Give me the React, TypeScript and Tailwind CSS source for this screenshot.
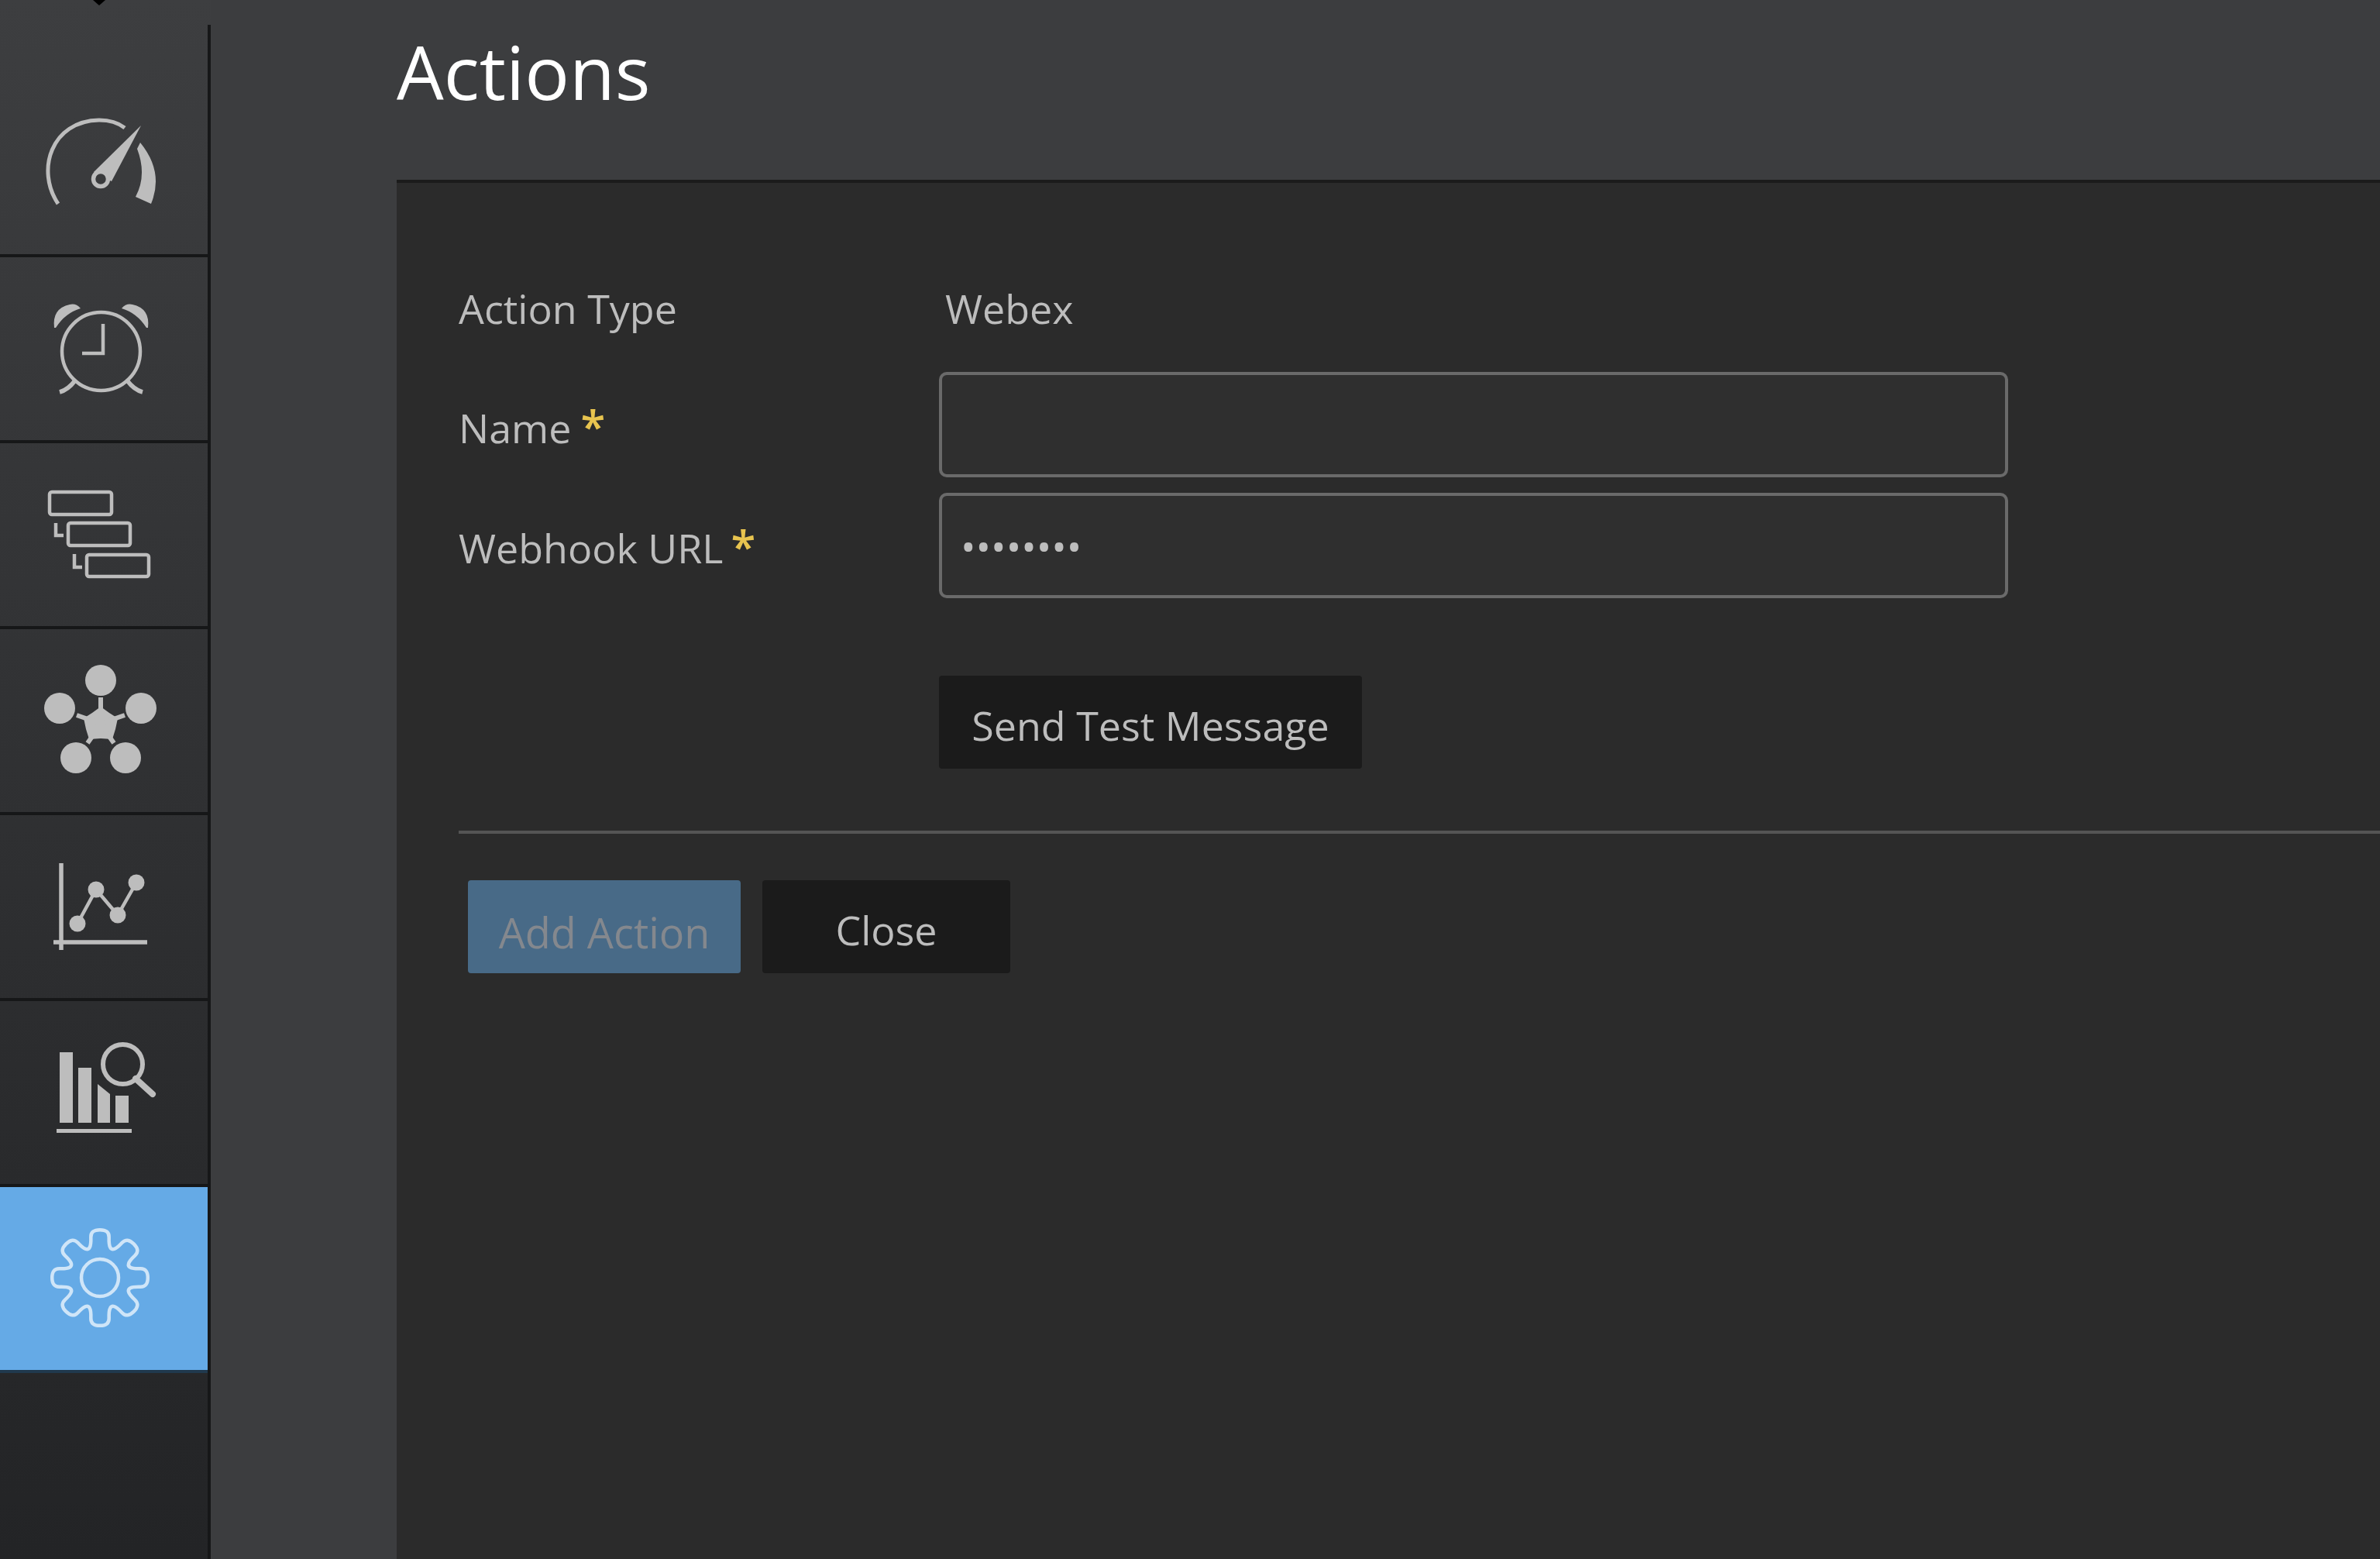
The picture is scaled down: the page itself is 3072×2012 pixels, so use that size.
const grey = "#bdbdbd";

// viewBox uses page y so the icon coordinates read straight off the screenshot
function GaugeIcon() {
  return (
    <svg width="268" height="236" viewBox="0 92 268 236" fill={grey}>
      <path d="M75 263 C46 220 66 156 128 155 C140 155 152 158 161 165" fill="none" stroke={grey} strokeWidth="5" />
      <path d="M181 184 Q212 222 195 263 L175 254 Q190 226 177 192 Z" />
      <polygon points="182,162 144,234 121,222" />
      <circle cx="130" cy="231" r="9.5" fill="#3a3b3d" stroke={grey} strokeWidth="5.5" />
    </svg>
  );
}

function AlarmIcon() {
  return (
    <svg width="268" height="236" viewBox="0 332 268 236" fill={grey}>
      <circle cx="130.5" cy="453.5" r="50.5" fill="none" stroke={grey} strokeWidth="4.5" />
      <path d="M133 418 V456 H106" fill="none" stroke={grey} strokeWidth="4.5" />
      <path d="M70 423 Q67 398 90 393 Q98 391 104 398 Q84 404 72 423 Z" />
      <path d="M191 423 Q194 398 171 393 Q163 391 157 398 Q177 404 189 423 Z" />
      <path d="M77 506 Q88 503 97 491 M184 506 Q173 503 164 491" fill="none" stroke={grey} strokeWidth="5.5" />
    </svg>
  );
}

function FlowIcon() {
  return (
    <svg width="268" height="236" viewBox="0 572 268 236" fill="none" stroke={grey} strokeWidth="4.5">
      <rect x="64" y="635" width="80" height="29" rx="3" />
      <rect x="88" y="675" width="80" height="29" rx="3" />
      <rect x="112" y="716" width="80" height="28" rx="3" />
      <path d="M72 675 V691 H82 M96 715 V732 H106" />
    </svg>
  );
}

function NetworkIcon() {
  return (
    <svg width="268" height="236" viewBox="0 812 268 236" fill={grey}>
      <circle cx="130" cy="878" r="20" />
      <circle cx="77" cy="914" r="20" />
      <circle cx="182" cy="914" r="20" />
      <circle cx="98" cy="978" r="20" />
      <circle cx="162" cy="978" r="20" />
      <polygon points="130,912 141,920 152,927 149,941 145,954 130,953 115,954 111,941 108,927 119,920" />
      <path d="M130 900 V925 M99 923 L125 932 M161 923 L135 932 M113 959 L125 942 M147 959 L135 942" stroke={grey} strokeWidth="6" />
    </svg>
  );
}

function ChartIcon() {
  return (
    <svg width="268" height="236" viewBox="0 1052 268 236" fill={grey}>
      <path d="M79 1114 V1226 M69 1216 H190" stroke={grey} strokeWidth="5.5" />
      <path d="M100 1192 L124 1148 L152 1181 L176 1139" fill="none" stroke={grey} strokeWidth="4.5" />
      <circle cx="100" cy="1192" r="10.5" />
      <circle cx="124" cy="1148" r="10.5" />
      <circle cx="152" cy="1181" r="10.5" />
      <circle cx="176" cy="1139" r="10.5" />
    </svg>
  );
}

function BarsIcon() {
  return (
    <svg width="268" height="236" viewBox="0 1292 268 236" fill={grey}>
      <rect x="77" y="1358" width="17" height="91" />
      <rect x="101" y="1378" width="17" height="71" />
      <path d="M126 1399 L142 1412 V1449 H126 Z" />
      <rect x="149" y="1414" width="17" height="35" />
      <rect x="73" y="1457" width="97" height="5" />
      <circle cx="158.5" cy="1373.5" r="25.5" fill="none" stroke={grey} strokeWidth="6" />
      <path d="M175 1392 L197 1412" stroke={grey} strokeWidth="8" strokeLinecap="round" />
    </svg>
  );
}

function gearPath(cx: number, cy: number) {
  const pts: [number, number][] = [];
  for (let i = 0; i < 8; i++) {
    const a = (i * Math.PI) / 4 - Math.PI / 2;
    const polar = (r: number, da: number): [number, number] => [
      cx + r * Math.cos(a + (da * Math.PI) / 180),
      cy + r * Math.sin(a + (da * Math.PI) / 180),
    ];
    pts.push(polar(63, -11), polar(63, 11), polar(44, 15), polar(39, 22.5), polar(44, 30));
  }
  const mid = (p: [number, number], q: [number, number]) =>
    `${((p[0] + q[0]) / 2).toFixed(1)} ${((p[1] + q[1]) / 2).toFixed(1)}`;
  let d = `M${mid(pts[pts.length - 1], pts[0])}`;
  pts.forEach((p, i) => {
    d += ` Q${p[0].toFixed(1)} ${p[1].toFixed(1)} ${mid(p, pts[(i + 1) % pts.length])}`;
  });
  return d + " Z";
}

function GearIcon() {
  return (
    <svg width="268" height="236" viewBox="0 1532 268 236" fill="none" stroke="#cfe5f8" strokeWidth="4.5">
      <path d={gearPath(129, 1649)} />
      <circle cx="129" cy="1649" r="24" />
    </svg>
  );
}

const navRows = [GaugeIcon, AlarmIcon, FlowIcon, NetworkIcon, ChartIcon, BarsIcon];

export default function App() {
  return (
    <div className="relative flex h-[2012px] w-[3072px] overflow-hidden bg-[#3c3d3f] font-['Open_Sans',sans-serif] text-[52px] leading-[72px] text-[#bdbdbd]">
      <svg className="absolute left-[120px] top-0" width="16" height="7" viewBox="0 0 16 7">
        <polygon points="0,0 16,0 8,7" fill="#000" />
      </svg>

      <aside className="flex w-[272px] shrink-0 flex-col bg-linear-to-b from-[#3d3e40] to-[#232426]">
        <div className="h-[32px]" />
        <div className="flex-1 border-r-4 border-[#161718] pt-[60px]">
          {navRows.map((Icon, i) => (
            <div key={i} className="h-[240px] border-b-4 border-[#161718]">
              <Icon />
            </div>
          ))}
          <div className="h-[240px] border-b-4 border-[#20394e] bg-[#65aae6]">
            <GearIcon />
          </div>
        </div>
      </aside>

      <main className="flex min-w-0 flex-1 flex-col pl-[240px]">
        <header className="h-[232px] pt-[26px]">
          <h1 className="text-[96px] leading-[131px] text-white">Actions</h1>
        </header>

        <section className="flex-1 border-t-4 border-[#1b1b1b] bg-[#2b2b2b] pl-[80px] pt-[126px]">
          <div className="grid grid-cols-[620px_1380px] items-center gap-y-[20px]">
            <div className="mb-[26px]">Action Type</div>
            <div className="mb-[26px] pl-[8px]">Webex</div>

            <label className="pt-[8px]">
              Name<span className="ml-[12px] text-[58px] leading-[58px] font-semibold text-[#e8c44f]">*</span>
            </label>
            <input className="h-[136px] rounded-[10px] border-4 border-[#6a6a6a] bg-[#2f2f2f] px-[24px] outline-none" />

            <label className="pt-[6px]">
              Webhook URL<span className="ml-[10px] text-[58px] leading-[58px] font-semibold text-[#e8c44f]">*</span>
            </label>
            <input
              type="password"
              defaultValue="password"
              className="h-[136px] rounded-[10px] border-4 border-[#6a6a6a] bg-[#2f2f2f] px-[24px] outline-none"
            />
          </div>

          <div className="mt-[100px] pl-[620px]">
            <button className="h-[120px] w-[546px] rounded-[4px] bg-[#1b1b1b] pt-[8px]">Send Test Message</button>
          </div>

          <div className="mt-[80px] h-[4px] bg-[#555555]" />

          <div className="ml-[12px] mt-[60px] flex gap-[28px]">
            <button disabled className="h-[120px] w-[352px] rounded-[4px] bg-[#486a87] pt-[14px] text-[54px] text-[#84888e]">
              Add Action
            </button>
            <button className="h-[120px] w-[320px] rounded-[4px] bg-[#1b1b1b] pt-[8px]">Close</button>
          </div>
        </section>
      </main>
    </div>
  );
}
